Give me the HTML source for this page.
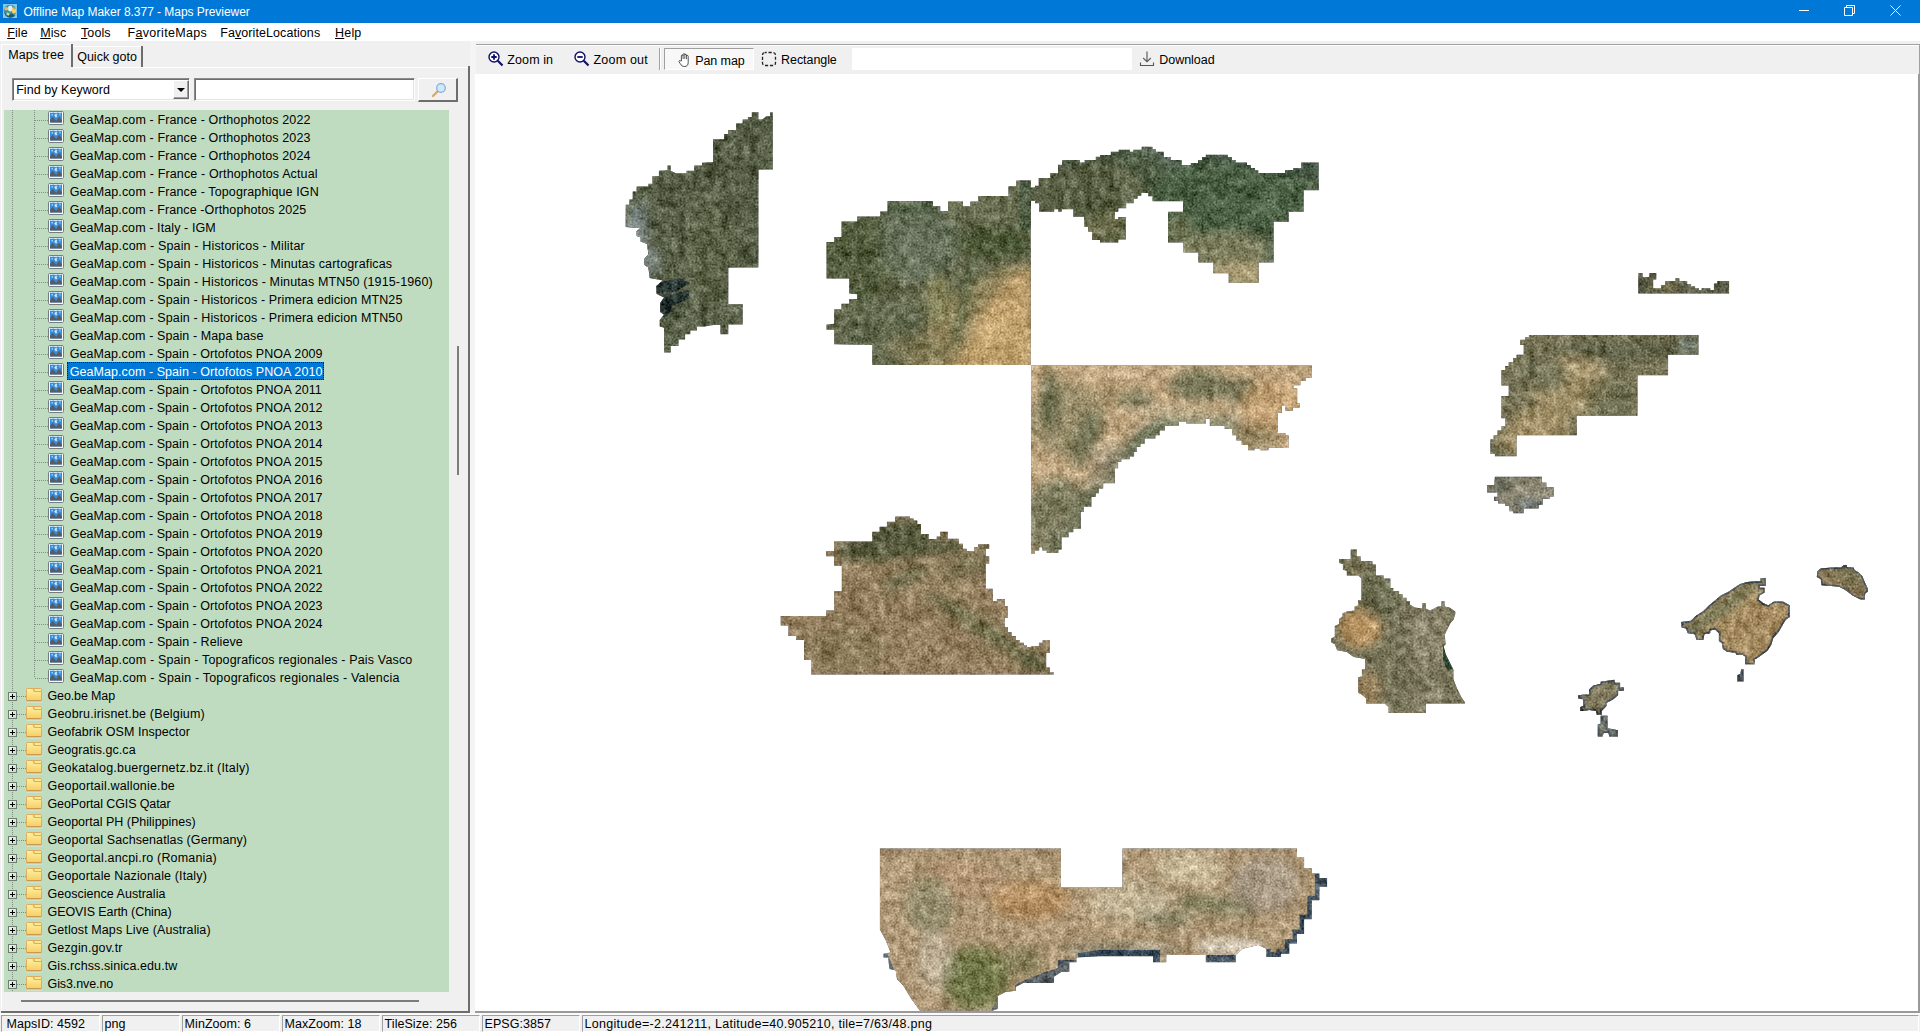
<!DOCTYPE html>
<html><head><meta charset="utf-8"><title>Offline Map Maker</title>
<style>
*{margin:0;padding:0;box-sizing:border-box}
html,body{width:1920px;height:1032px;overflow:hidden;background:#f0f0f0;font-family:"Liberation Sans",sans-serif;font-size:12.5px;color:#000}
body{position:relative}
i{display:block;position:absolute;font-style:normal}
em{font-style:normal}
.x{position:absolute;white-space:nowrap;line-height:16px;height:16px}
#title{position:absolute;left:0;top:0;width:1920px;height:23px;background:#0078d7;color:#fff}
#appic{position:absolute;left:3px;top:3px}
#tt{left:23.5px;top:4px;font-size:12px;color:#fff;letter-spacing:-0.04px}
#wc{position:absolute;left:1780px;top:0}
#menu{position:absolute;left:0;top:23px;width:1920px;height:18px;background:#fff}
#menu span{position:absolute;top:2px;line-height:16px;height:16px;white-space:nowrap;letter-spacing:0.1px}
#menu u{text-decoration:underline;text-decoration-thickness:1px;text-underline-offset:0.5px}
/* left panel */
#paneL{left:1px;top:44px;width:1px;height:968px;background:#fff}
#paneT{left:73px;top:67px;width:395px;height:1px;background:#fff}
#paneR{left:468px;top:66px;width:2px;height:947px;background:#6d6d6d}
#paneB{left:1px;top:1011px;width:469px;height:2px;background:#6d6d6d}
#tab1T{left:2px;top:44px;width:69px;height:1px;background:#fff}
#tab1R{left:71px;top:44px;width:2px;height:23px;background:#6d6d6d}
#tab2T{left:73px;top:46px;width:68px;height:1px;background:#fff}
#tab2R{left:141px;top:46px;width:2px;height:21px;background:#6d6d6d}
#combo{position:absolute;left:12px;top:78px;width:178px;height:23px;background:#fff;border:1px solid #8a8a8a;border-right-color:#fff;border-bottom-color:#fff;box-shadow:inset 1px 1px 0 #6d6d6d,inset -1px -1px 0 #e3e3e3}
#combo b{position:absolute;left:160px;top:1px;width:16px;height:19px;background:#f0f0f0;border:1px solid #fff;border-right-color:#6d6d6d;border-bottom-color:#6d6d6d;box-shadow:inset -1px -1px 0 #a0a0a0}
#combo b i{left:3px;top:7px;width:0;height:0;border:4px solid transparent;border-top:4px solid #000;border-bottom:0}
#edit{position:absolute;left:194px;top:78px;width:221px;height:23px;background:#fff;border:1px solid #8a8a8a;border-right-color:#fff;border-bottom-color:#fff;box-shadow:inset 1px 1px 0 #6d6d6d,inset -1px -1px 0 #e3e3e3}
#sbtn{position:absolute;left:418px;top:78px;width:40px;height:24px;background:#f0f0f0;border:1px solid #fff;border-right:2px solid #6d6d6d;border-bottom:2px solid #6d6d6d}
#sbtn svg{position:absolute;left:9px;top:0}
#tree{position:absolute;left:4px;top:110px;width:445px;height:882px;background:#c0dcc0;overflow:hidden}
.vl{width:1px;background-image:linear-gradient(#7f8f7f 50%,transparent 50%);background-size:1px 2px}
.row{position:absolute;left:0;height:18px;width:445px;white-space:nowrap}
.row .t{position:absolute;top:2px;line-height:16px;height:16px;letter-spacing:0.12px}
.leaf .t{left:65.7px}
.fold .t{left:43.5px}
.row .ic{position:absolute;left:44px;top:1px}
.row .fic{position:absolute;left:22px;top:2px}
.hl{left:31px;top:10px;width:13px;height:1px;background-image:linear-gradient(90deg,#7f8f7f 50%,transparent 50%);background-size:2px 1px}
.hl2{left:13px;top:10px;width:9px;height:1px;background-image:linear-gradient(90deg,#7f8f7f 50%,transparent 50%);background-size:2px 1px}
.pm{left:4px;top:6px;width:9px;height:9px;border:1px solid #6f7d6f;background:linear-gradient(135deg,#eef6ee,#c8dec8)}
.pm:before{content:"";position:absolute;left:1px;top:3px;width:5px;height:1px;background:#000}
.pm:after{content:"";position:absolute;left:3px;top:1px;width:1px;height:5px;background:#000}
.selbg{left:63px;top:0;height:18px;background:#0078d7;outline:1px dotted #1a1a1a;outline-offset:-1px}
.sel .t{color:#fff}
#vthumb{left:457px;top:346px;width:2px;height:129px;background:#7d7d7d}
#hthumb{left:21px;top:1000px;width:398px;height:2px;background:#7d7d7d}
/* toolbar */
#toolbar{position:absolute;left:476px;top:44px;width:1444px;height:30px;background:#f0f0f0;border-top:1px solid #a0a0a0;box-shadow:inset 0 1px 0 #fff}
#toolbar svg{position:absolute}
#sep{left:659px;top:48px;width:2px;height:22px;border-left:1px solid #a0a0a0;border-right:1px solid #fff}
#pan{position:absolute;left:664px;top:48px;width:90px;height:22px;border:1px solid #a0a0a0;border-right-color:#fff;border-bottom-color:#fff;background:#f8f8f8}
#tbedit{position:absolute;left:852px;top:48px;width:280px;height:22px;background:#fff}
#split{left:470px;top:41px;width:6px;height:972px;background:#f4f4f4}
#map{position:absolute;left:475px;top:74px;width:1445px;height:939px;background:#fff;overflow:hidden;border-right:2px solid #999;border-bottom:2px solid #999}
#map svg{position:absolute;left:-475px;top:-74px}
#status{position:absolute;left:0;top:1013px;width:1920px;height:19px;background:#f0f0f0;border-top:2px solid #fafafa}
#status span{position:absolute;top:0;height:17px;border:1px solid #a0a0a0;border-right-color:#fff;border-bottom-color:#fff;padding:0 0 0 1.6px;line-height:17px;white-space:nowrap;overflow:hidden;letter-spacing:0.05px}
#tbR{left:1919px;top:44px;width:1px;height:30px;background:#a0a0a0}

</style></head><body>
<svg width="0" height="0" style="position:absolute">
<defs>
<g id="imgic">
<rect x="0.5" y="0.5" width="15" height="13" rx="1.2" fill="#fbfcfd" stroke="#777c82"/>
<rect x="2" y="1.5" width="12" height="10" fill="#3b8cd6"/>
<path d="M2 11.5V9.2l2.6-3.4 3.6 4.3 2.9-4.3 2.9 3.7v2z" fill="#595b61"/>
<path d="M2.5 1.5h2M6 1.5h3M10.5 1.5h2.5" stroke="#cfe7fa" stroke-width="1"/>
<rect x="3.5" y="3" width="1.5" height="1.5" fill="#8fd0fb"/><path d="M9 3.2a1.5 1.5 0 100 2.6 2 2 0 010-2.6z" fill="#d3edfd" stroke="#bfe4fc" stroke-width="0.6"/><rect x="11.5" y="2.5" width="1" height="2" fill="#a5d9fb"/>
</g>
<linearGradient id="fg" x1="0" y1="0" x2="0" y2="1"><stop offset="0" stop-color="#fdf2a4"/><stop offset="1" stop-color="#f8cc60"/></linearGradient>
<g id="foldic">
<path d="M1.5 0.5h6l1 3h7a1 1 0 011 1v7.5a1 1 0 01-1 1h-14a1 1 0 01-1-1v-10.5a1 1 0 011-1z" fill="url(#fg)" stroke="#dcaa58" stroke-width="1"/>
<path d="M8 0.5h7.5a1 1 0 011 1V3.5H9z" fill="#fde88c" stroke="#dcaa58" stroke-width="1"/>
<path d="M1 12.5h15" stroke="#c9984c" stroke-width="1"/>
<path d="M0.5 14.2h16" stroke="#e6eede" stroke-width="0.8" opacity="0.8"/>
</g>
</defs></svg>

<div id="title"><svg id="appic" width="16" height="16" viewBox="0 0 16 16"><rect x="-0.5" y="0.5" width="15" height="15" fill="#0a62d0"/><rect x="0" y="1" width="14" height="14" fill="#82c8f0"/><circle cx="7" cy="8" r="6.2" fill="#3f8ea8"/><path d="M1.5 9.5a6 6 0 0011 2.5c-2 1-3-2-5-1s-2 2-3.5 1.5S2.5 9 1.5 9.5z" fill="#1d5c60"/><ellipse cx="7.3" cy="5.5" rx="2.3" ry="3" fill="#e4f0ee"/><ellipse cx="3.3" cy="5.8" rx="2" ry="1.7" fill="#f0b566"/><ellipse cx="11" cy="7.5" rx="2.2" ry="3" fill="#f2d468"/><ellipse cx="11.5" cy="5.8" rx="1" ry="0.5" fill="#a08a30"/><ellipse cx="5" cy="11" rx="1.6" ry="1.3" fill="#ded978" transform="rotate(35 5 11)"/></svg><span id="tt" class="x">Offline Map Maker 8.377 - Maps Previewer</span>
<svg id="wc" width="140" height="23" viewBox="0 0 140 23"><g stroke="#fff" stroke-width="1" fill="none"><path d="M19 10.5h10"/><path d="M64.5 7.5h8v8h-8z"/><path d="M66.5 7.5v-2h8v8h-2"/><path d="M110.5 5.5l10 10M120.5 5.5l-10 10"/></g></svg></div>

<div id="menu"><span style="left:7.2px"><u>F</u>ile</span><span style="left:40.2px"><u>M</u>isc</span><span style="left:81px"><u>T</u>ools</span><span style="left:127.6px;letter-spacing:0.3px">F<u>a</u>voriteMaps</span><span style="left:220.2px;letter-spacing:0.08px">Fa<u>v</u>oriteLocations</span><span style="left:335px;letter-spacing:0.2px"><u>H</u>elp</span></div>

<i id="paneL"></i><i id="paneT"></i><i id="paneR"></i><i id="paneB"></i>
<i id="tab1T"></i><i id="tab1R"></i><i id="tab2T"></i><i id="tab2R"></i>
<span class="x" style="left:8.3px;top:47px">Maps tree</span>
<span class="x" style="left:77.2px;top:49px">Quick goto</span>
<div id="combo"><span class="x" style="left:3.2px;top:3px;letter-spacing:0.05px">Find by Keyword</span><b><i></i></b></div>
<div id="edit"></div>
<div id="sbtn"><svg width="22" height="22" viewBox="0 0 22 22"><path d="M5 17l5-5" stroke="#e0a85a" stroke-width="2.4" stroke-linecap="round"/><circle cx="13" cy="9" r="4.3" fill="#cfe9fb" stroke="#84abd8" stroke-width="1.2"/></svg></div>
<div id="tree">
  <i class="vl" style="left:8px;top:0;height:882px"></i>
  <i class="vl" style="left:30px;top:0;height:568px"></i>
  <div class="row leaf" style="top:0px"><i class="hl"></i><svg class="ic" width="16" height="14" viewBox="0 0 16 14"><use href="#imgic"/></svg><span class="t" style="letter-spacing:0.123px">GeaMap.com - France - Orthophotos 2022</span></div><div class="row leaf" style="top:18px"><i class="hl"></i><svg class="ic" width="16" height="14" viewBox="0 0 16 14"><use href="#imgic"/></svg><span class="t" style="letter-spacing:0.123px">GeaMap.com - France - Orthophotos 2023</span></div><div class="row leaf" style="top:36px"><i class="hl"></i><svg class="ic" width="16" height="14" viewBox="0 0 16 14"><use href="#imgic"/></svg><span class="t" style="letter-spacing:0.123px">GeaMap.com - France - Orthophotos 2024</span></div><div class="row leaf" style="top:54px"><i class="hl"></i><svg class="ic" width="16" height="14" viewBox="0 0 16 14"><use href="#imgic"/></svg><span class="t" style="letter-spacing:0.139px">GeaMap.com - France - Orthophotos Actual</span></div><div class="row leaf" style="top:72px"><i class="hl"></i><svg class="ic" width="16" height="14" viewBox="0 0 16 14"><use href="#imgic"/></svg><span class="t" style="letter-spacing:0.123px">GeaMap.com - France - Topographique IGN</span></div><div class="row leaf" style="top:90px"><i class="hl"></i><svg class="ic" width="16" height="14" viewBox="0 0 16 14"><use href="#imgic"/></svg><span class="t" style="letter-spacing:0.107px">GeaMap.com - France -Orthophotos 2025</span></div><div class="row leaf" style="top:108px"><i class="hl"></i><svg class="ic" width="16" height="14" viewBox="0 0 16 14"><use href="#imgic"/></svg><span class="t" style="letter-spacing:0.096px">GeaMap.com - Italy - IGM</span></div><div class="row leaf" style="top:126px"><i class="hl"></i><svg class="ic" width="16" height="14" viewBox="0 0 16 14"><use href="#imgic"/></svg><span class="t" style="letter-spacing:0.162px">GeaMap.com - Spain - Historicos - Militar</span></div><div class="row leaf" style="top:144px"><i class="hl"></i><svg class="ic" width="16" height="14" viewBox="0 0 16 14"><use href="#imgic"/></svg><span class="t" style="letter-spacing:0.156px">GeaMap.com - Spain - Historicos - Minutas cartograficas</span></div><div class="row leaf" style="top:162px"><i class="hl"></i><svg class="ic" width="16" height="14" viewBox="0 0 16 14"><use href="#imgic"/></svg><span class="t" style="letter-spacing:0.138px">GeaMap.com - Spain - Historicos - Minutas MTN50 (1915-1960)</span></div><div class="row leaf" style="top:180px"><i class="hl"></i><svg class="ic" width="16" height="14" viewBox="0 0 16 14"><use href="#imgic"/></svg><span class="t" style="letter-spacing:0.115px">GeaMap.com - Spain - Historicos - Primera edicion MTN25</span></div><div class="row leaf" style="top:198px"><i class="hl"></i><svg class="ic" width="16" height="14" viewBox="0 0 16 14"><use href="#imgic"/></svg><span class="t" style="letter-spacing:0.115px">GeaMap.com - Spain - Historicos - Primera edicion MTN50</span></div><div class="row leaf" style="top:216px"><i class="hl"></i><svg class="ic" width="16" height="14" viewBox="0 0 16 14"><use href="#imgic"/></svg><span class="t" style="letter-spacing:0.09px">GeaMap.com - Spain - Mapa base</span></div><div class="row leaf" style="top:234px"><i class="hl"></i><svg class="ic" width="16" height="14" viewBox="0 0 16 14"><use href="#imgic"/></svg><span class="t" style="letter-spacing:0.066px">GeaMap.com - Spain - Ortofotos PNOA 2009</span></div><div class="row leaf sel" style="top:252px"><i class="hl"></i><i class="selbg" style="width:257px"></i><svg class="ic" width="16" height="14" viewBox="0 0 16 14"><use href="#imgic"/></svg><span class="t" style="letter-spacing:0.066px">GeaMap.com - Spain - Ortofotos PNOA 2010</span></div><div class="row leaf" style="top:270px"><i class="hl"></i><svg class="ic" width="16" height="14" viewBox="0 0 16 14"><use href="#imgic"/></svg><span class="t" style="letter-spacing:0.074px">GeaMap.com - Spain - Ortofotos PNOA 2011</span></div><div class="row leaf" style="top:288px"><i class="hl"></i><svg class="ic" width="16" height="14" viewBox="0 0 16 14"><use href="#imgic"/></svg><span class="t" style="letter-spacing:0.066px">GeaMap.com - Spain - Ortofotos PNOA 2012</span></div><div class="row leaf" style="top:306px"><i class="hl"></i><svg class="ic" width="16" height="14" viewBox="0 0 16 14"><use href="#imgic"/></svg><span class="t" style="letter-spacing:0.066px">GeaMap.com - Spain - Ortofotos PNOA 2013</span></div><div class="row leaf" style="top:324px"><i class="hl"></i><svg class="ic" width="16" height="14" viewBox="0 0 16 14"><use href="#imgic"/></svg><span class="t" style="letter-spacing:0.066px">GeaMap.com - Spain - Ortofotos PNOA 2014</span></div><div class="row leaf" style="top:342px"><i class="hl"></i><svg class="ic" width="16" height="14" viewBox="0 0 16 14"><use href="#imgic"/></svg><span class="t" style="letter-spacing:0.066px">GeaMap.com - Spain - Ortofotos PNOA 2015</span></div><div class="row leaf" style="top:360px"><i class="hl"></i><svg class="ic" width="16" height="14" viewBox="0 0 16 14"><use href="#imgic"/></svg><span class="t" style="letter-spacing:0.066px">GeaMap.com - Spain - Ortofotos PNOA 2016</span></div><div class="row leaf" style="top:378px"><i class="hl"></i><svg class="ic" width="16" height="14" viewBox="0 0 16 14"><use href="#imgic"/></svg><span class="t" style="letter-spacing:0.066px">GeaMap.com - Spain - Ortofotos PNOA 2017</span></div><div class="row leaf" style="top:396px"><i class="hl"></i><svg class="ic" width="16" height="14" viewBox="0 0 16 14"><use href="#imgic"/></svg><span class="t" style="letter-spacing:0.066px">GeaMap.com - Spain - Ortofotos PNOA 2018</span></div><div class="row leaf" style="top:414px"><i class="hl"></i><svg class="ic" width="16" height="14" viewBox="0 0 16 14"><use href="#imgic"/></svg><span class="t" style="letter-spacing:0.066px">GeaMap.com - Spain - Ortofotos PNOA 2019</span></div><div class="row leaf" style="top:432px"><i class="hl"></i><svg class="ic" width="16" height="14" viewBox="0 0 16 14"><use href="#imgic"/></svg><span class="t" style="letter-spacing:0.066px">GeaMap.com - Spain - Ortofotos PNOA 2020</span></div><div class="row leaf" style="top:450px"><i class="hl"></i><svg class="ic" width="16" height="14" viewBox="0 0 16 14"><use href="#imgic"/></svg><span class="t" style="letter-spacing:0.066px">GeaMap.com - Spain - Ortofotos PNOA 2021</span></div><div class="row leaf" style="top:468px"><i class="hl"></i><svg class="ic" width="16" height="14" viewBox="0 0 16 14"><use href="#imgic"/></svg><span class="t" style="letter-spacing:0.066px">GeaMap.com - Spain - Ortofotos PNOA 2022</span></div><div class="row leaf" style="top:486px"><i class="hl"></i><svg class="ic" width="16" height="14" viewBox="0 0 16 14"><use href="#imgic"/></svg><span class="t" style="letter-spacing:0.066px">GeaMap.com - Spain - Ortofotos PNOA 2023</span></div><div class="row leaf" style="top:504px"><i class="hl"></i><svg class="ic" width="16" height="14" viewBox="0 0 16 14"><use href="#imgic"/></svg><span class="t" style="letter-spacing:0.066px">GeaMap.com - Spain - Ortofotos PNOA 2024</span></div><div class="row leaf" style="top:522px"><i class="hl"></i><svg class="ic" width="16" height="14" viewBox="0 0 16 14"><use href="#imgic"/></svg><span class="t" style="letter-spacing:0.081px">GeaMap.com - Spain - Relieve</span></div><div class="row leaf" style="top:540px"><i class="hl"></i><svg class="ic" width="16" height="14" viewBox="0 0 16 14"><use href="#imgic"/></svg><span class="t" style="letter-spacing:0.158px">GeaMap.com - Spain - Topograficos regionales - Pais Vasco</span></div><div class="row leaf" style="top:558px"><i class="hl"></i><svg class="ic" width="16" height="14" viewBox="0 0 16 14"><use href="#imgic"/></svg><span class="t" style="letter-spacing:0.195px">GeaMap.com - Spain - Topograficos regionales - Valencia</span></div><div class="row fold" style="top:576px"><i class="hl2"></i><i class="pm"></i><svg class="fic" width="16" height="15" viewBox="0 0 17 15" preserveAspectRatio="none"><use href="#foldic"/></svg><span class="t" style="letter-spacing:-0.133px">Geo.be Map</span></div><div class="row fold" style="top:594px"><i class="hl2"></i><i class="pm"></i><svg class="fic" width="16" height="15" viewBox="0 0 17 15" preserveAspectRatio="none"><use href="#foldic"/></svg><span class="t" style="letter-spacing:0.167px">Geobru.irisnet.be (Belgium)</span></div><div class="row fold" style="top:612px"><i class="hl2"></i><i class="pm"></i><svg class="fic" width="16" height="15" viewBox="0 0 17 15" preserveAspectRatio="none"><use href="#foldic"/></svg><span class="t" style="letter-spacing:0.058px">Geofabrik OSM Inspector</span></div><div class="row fold" style="top:630px"><i class="hl2"></i><i class="pm"></i><svg class="fic" width="16" height="15" viewBox="0 0 17 15" preserveAspectRatio="none"><use href="#foldic"/></svg><span class="t" style="letter-spacing:0.04px">Geogratis.gc.ca</span></div><div class="row fold" style="top:648px"><i class="hl2"></i><i class="pm"></i><svg class="fic" width="16" height="15" viewBox="0 0 17 15" preserveAspectRatio="none"><use href="#foldic"/></svg><span class="t" style="letter-spacing:0.193px">Geokatalog.buergernetz.bz.it (Italy)</span></div><div class="row fold" style="top:666px"><i class="hl2"></i><i class="pm"></i><svg class="fic" width="16" height="15" viewBox="0 0 17 15" preserveAspectRatio="none"><use href="#foldic"/></svg><span class="t" style="letter-spacing:0.171px">Geoportail.wallonie.be</span></div><div class="row fold" style="top:684px"><i class="hl2"></i><i class="pm"></i><svg class="fic" width="16" height="15" viewBox="0 0 17 15" preserveAspectRatio="none"><use href="#foldic"/></svg><span class="t" style="letter-spacing:-0.103px">GeoPortal CGIS Qatar</span></div><div class="row fold" style="top:702px"><i class="hl2"></i><i class="pm"></i><svg class="fic" width="16" height="15" viewBox="0 0 17 15" preserveAspectRatio="none"><use href="#foldic"/></svg><span class="t" style="letter-spacing:0.008px">Geoportal PH (Philippines)</span></div><div class="row fold" style="top:720px"><i class="hl2"></i><i class="pm"></i><svg class="fic" width="16" height="15" viewBox="0 0 17 15" preserveAspectRatio="none"><use href="#foldic"/></svg><span class="t" style="letter-spacing:0.094px">Geoportal Sachsenatlas (Germany)</span></div><div class="row fold" style="top:738px"><i class="hl2"></i><i class="pm"></i><svg class="fic" width="16" height="15" viewBox="0 0 17 15" preserveAspectRatio="none"><use href="#foldic"/></svg><span class="t" style="letter-spacing:0.171px">Geoportal.ancpi.ro (Romania)</span></div><div class="row fold" style="top:756px"><i class="hl2"></i><i class="pm"></i><svg class="fic" width="16" height="15" viewBox="0 0 17 15" preserveAspectRatio="none"><use href="#foldic"/></svg><span class="t" style="letter-spacing:0.136px">Geoportale Nazionale (Italy)</span></div><div class="row fold" style="top:774px"><i class="hl2"></i><i class="pm"></i><svg class="fic" width="16" height="15" viewBox="0 0 17 15" preserveAspectRatio="none"><use href="#foldic"/></svg><span class="t" style="letter-spacing:0.024px">Geoscience Australia</span></div><div class="row fold" style="top:792px"><i class="hl2"></i><i class="pm"></i><svg class="fic" width="16" height="15" viewBox="0 0 17 15" preserveAspectRatio="none"><use href="#foldic"/></svg><span class="t" style="letter-spacing:-0.087px">GEOVIS Earth (China)</span></div><div class="row fold" style="top:810px"><i class="hl2"></i><i class="pm"></i><svg class="fic" width="16" height="15" viewBox="0 0 17 15" preserveAspectRatio="none"><use href="#foldic"/></svg><span class="t" style="letter-spacing:0.093px">Getlost Maps Live (Australia)</span></div><div class="row fold" style="top:828px"><i class="hl2"></i><i class="pm"></i><svg class="fic" width="16" height="15" viewBox="0 0 17 15" preserveAspectRatio="none"><use href="#foldic"/></svg><span class="t" style="letter-spacing:0.132px">Gezgin.gov.tr</span></div><div class="row fold" style="top:846px"><i class="hl2"></i><i class="pm"></i><svg class="fic" width="16" height="15" viewBox="0 0 17 15" preserveAspectRatio="none"><use href="#foldic"/></svg><span class="t" style="letter-spacing:0.09px">Gis.rchss.sinica.edu.tw</span></div><div class="row fold" style="top:864px"><i class="hl2"></i><i class="pm"></i><svg class="fic" width="16" height="15" viewBox="0 0 17 15" preserveAspectRatio="none"><use href="#foldic"/></svg><span class="t" style="letter-spacing:-0.092px">Gis3.nve.no</span></div>
</div>
<i id="vthumb"></i><i id="hthumb"></i>
<i id="split"></i>

<div id="toolbar"></div><i id="tbR"></i>
<svg style="position:absolute;left:488px;top:51px" width="16" height="16" viewBox="0 0 16 16"><circle cx="6" cy="6" r="5" fill="#fff" stroke="#10106a" stroke-width="1.4"/><path d="M3.3 6h5.4M6 3.3v5.4" stroke="#10106a" stroke-width="1.8"/><path d="M9.8 9.8l4.7 4.7" stroke="#10106a" stroke-width="2.2"/></svg>
<span class="x" style="left:507.3px;top:52px;letter-spacing:0.1px">Zoom in</span>
<svg style="position:absolute;left:574px;top:51px" width="16" height="16" viewBox="0 0 16 16"><circle cx="6" cy="6" r="5" fill="#fff" stroke="#10106a" stroke-width="1.4"/><path d="M3.3 6h5.4" stroke="#10106a" stroke-width="1.8"/><path d="M9.8 9.8l4.7 4.7" stroke="#10106a" stroke-width="2.2"/></svg>
<span class="x" style="left:593.5px;top:52px;letter-spacing:0.2px">Zoom out</span>
<i id="sep"></i>
<div id="pan"></div>
<svg style="position:absolute;left:678px;top:53px" width="12" height="14" viewBox="0 0 12 14"><path d="M3.4 8V2.8a.85.85 0 011.7 0V1.5a.85.85 0 011.7 0v.6a.85.85 0 011.7 0v1.2a.85.85 0 011.7 0V9.5c0 2.4-1.2 4-3.6 4-2.2 0-3.3-1-4.3-2.8L1 8.8c-.5-1 .8-1.7 1.4-.9z" fill="#fff" stroke="#3c3c3c" stroke-width="0.9" stroke-linejoin="round"/><path d="M5.1 2.8V6M6.8 2V6M8.5 3.2V6.2" stroke="#3c3c3c" stroke-width="0.8" fill="none"/></svg>
<span class="x" style="left:695.2px;top:53px;letter-spacing:-0.08px">Pan map</span>
<svg style="position:absolute;left:761px;top:51px" width="16" height="16" viewBox="0 0 16 16"><rect x="1.5" y="1.5" width="13" height="13" rx="2.5" fill="none" stroke="#222" stroke-width="1.3" stroke-dasharray="3.2 1.8" stroke-dashoffset="1.5"/></svg>
<span class="x" style="left:781.1px;top:52px;letter-spacing:-0.07px">Rectangle</span>
<div id="tbedit"></div>
<svg style="position:absolute;left:1139px;top:50px" width="16" height="17" viewBox="0 0 16 17"><path d="M8 1.5v10M4.2 8L8 11.8 11.8 8M1.5 12.5v3h13v-3" fill="none" stroke="#555" stroke-width="1.1"/></svg>
<span class="x" style="left:1159.2px;top:52px;letter-spacing:-0.02px">Download</span>

<div id="map">
<svg width="1920" height="1032" viewBox="0 0 1920 1032">
<defs>
<filter id="bl" x="-50%" y="-50%" width="200%" height="200%"><feGaussianBlur stdDeviation="5"/></filter>
<filter id="tex" filterUnits="userSpaceOnUse" x="476" y="74" width="1444" height="940" color-interpolation-filters="sRGB">
<feTurbulence type="fractalNoise" baseFrequency="0.5" numOctaves="2" seed="7" result="n1"/>
<feColorMatrix in="n1" type="matrix" values="0.6 0.6 0 0 -0.1  0.6 0.6 0 0 -0.1  0.55 0.55 0 0 -0.05  0 0 0 0 1" result="g1"/>
<feTurbulence type="fractalNoise" baseFrequency="0.14" numOctaves="2" seed="23" result="n3"/>
<feColorMatrix in="n3" type="matrix" values="0.5 0.5 0 0 0  0.5 0.5 0 0 0  0.5 0.5 0 0 0  0 0 0 0 1" result="g3"/>
<feTurbulence type="fractalNoise" baseFrequency="0.05" numOctaves="2" seed="11" result="n2"/>
<feColorMatrix in="n2" type="matrix" values="0.5 0.5 0 0 0  0.5 0.5 0 0 0  0.5 0.5 0 0 0  0 0 0 0 1" result="g2"/>
<feComposite in="SourceGraphic" in2="g1" operator="arithmetic" k1="0" k2="1" k3="0.52" k4="-0.26" result="a1"/>
<feComposite in="a1" in2="g3" operator="arithmetic" k1="0" k2="1" k3="0.5" k4="-0.25" result="a3"/>
<feComposite in="a3" in2="g2" operator="arithmetic" k1="0" k2="1" k3="0.3" k4="-0.15" result="a2"/>
<feComposite in="a2" in2="SourceAlpha" operator="in"/>
</filter>

<clipPath id="c_galicia"><polygon points="751.8,112.3 758.4,112.3 758.4,119.6 762.3,119.6 766.2,116.2 770.2,116.2 770.2,112.3 772.8,112.3 772.8,169.4 758.4,169.4 758.4,267.5 728.3,267.5 728.3,304.2 742.7,304.2 742.7,324.6 728.3,324.6 728.3,334.3 720.4,334.3 720.4,325.1 713.9,325.1 704.7,326.4 696.9,326.4 696.9,330.4 690.3,330.4 690.3,334.3 685.1,334.3 685.1,339.5 678.5,339.5 678.5,346.1 670.7,346.1 670.7,352.6 664.1,352.6 664.1,327.7 659.7,326.4 659.7,319.9 664.1,314.7 660.2,312.0 660.2,302.9 664.1,297.6 656.3,293.7 656.3,285.9 662.8,280.6 649.7,278.0 648.4,267.5 644.5,264.9 644.5,258.4 648.4,254.5 647.1,244.0 640.6,241.4 640.6,237.4 636.6,236.1 636.6,230.9 640.6,228.3 625.7,227.0 625.7,204.7 629.3,204.7 629.3,199.5 632.7,199.5 632.7,191.6 636.6,191.6 636.6,186.4 648.4,186.4 648.4,183.8 652.4,183.8 652.4,175.9 658.9,175.9 658.9,170.7 667.5,170.2 667.5,165.4 670.7,165.4 670.7,170.7 675.9,173.3 686.4,173.3 686.4,170.7 694.2,170.7 694.2,165.4 702.1,165.4 702.1,162.8 713.1,162.3 713.1,139.3 724.3,139.3 724.3,134.0 728.3,134.0 728.3,130.1 736.1,130.1 736.1,123.6 742.7,123.6 742.7,119.6 747.9,119.6 747.9,117.0 751.8,117.0" shape-rendering="crispEdges"/></clipPath>
<clipPath id="c_cyl"><polygon points="887.5,200.9 933.0,200.9 933.0,206.3 940.3,206.3 940.3,211.1 948.0,211.1 948.0,201.4 963.0,201.4 963.0,206.3 970.3,206.3 970.3,201.4 978.3,201.4 978.3,195.9 1008.5,195.9 1008.5,186.2 1016.3,186.2 1016.3,180.4 1030.8,180.4 1030.8,364.9 872.2,364.9 872.2,345.0 834.2,344.3 834.2,329.8 826.5,329.8 826.5,324.4 834.2,323.7 834.2,309.2 841.5,309.2 841.5,303.8 849.2,303.8 849.2,299.0 857.2,299.0 857.2,294.2 849.2,293.4 849.2,278.4 826.5,278.4 826.5,242.1 834.2,242.1 834.2,237.0 841.5,237.0 841.5,221.5 857.2,221.5 857.2,216.4 880.2,216.4 880.2,211.6 887.5,211.6" shape-rendering="crispEdges"/></clipPath>
<clipPath id="c_north"><polygon points="1020.0,180.8 1030.8,180.8 1030.8,187.5 1035.0,187.5 1035.0,185.8 1038.7,185.8 1038.7,178.0 1050.3,178.0 1050.3,173.3 1058.0,173.3 1058.0,164.7 1062.0,164.7 1062.0,160.0 1080.0,160.0 1080.0,162.5 1084.7,162.5 1084.7,160.0 1095.8,160.0 1095.8,156.7 1100.0,156.7 1100.0,155.0 1110.8,155.0 1110.8,151.7 1118.7,151.7 1118.7,149.7 1130.0,149.7 1130.0,151.7 1133.3,151.7 1133.3,149.7 1141.7,149.7 1141.7,146.7 1152.5,146.7 1152.5,149.2 1155.8,149.2 1155.8,151.7 1163.7,151.7 1163.7,157.0 1170.8,157.0 1170.8,160.0 1181.7,160.0 1181.7,165.0 1190.8,165.0 1190.8,163.0 1198.0,163.0 1198.0,160.0 1202.0,160.0 1202.0,157.0 1205.8,157.0 1205.8,154.7 1228.0,154.7 1228.0,157.0 1232.0,157.0 1232.0,160.0 1235.8,160.0 1235.8,162.5 1247.0,162.5 1247.0,165.0 1250.8,165.0 1250.8,168.0 1255.0,168.0 1255.0,170.3 1258.3,170.3 1258.3,173.0 1285.0,173.0 1285.0,170.0 1293.3,170.0 1293.3,168.0 1301.3,168.0 1301.3,162.5 1318.7,162.5 1318.7,190.3 1303.7,190.3 1303.7,211.7 1288.7,211.7 1288.7,221.7 1273.7,221.7 1273.7,262.5 1258.7,262.5 1258.7,283.0 1228.7,283.0 1228.7,273.3 1213.3,273.3 1213.3,262.5 1198.3,262.5 1198.3,252.5 1183.3,252.5 1183.3,242.5 1168.0,242.5 1168.0,211.7 1183.0,211.7 1183.0,201.3 1152.5,201.3 1152.5,196.3 1148.3,196.3 1148.3,193.0 1141.3,193.0 1141.3,195.8 1137.5,195.8 1137.5,198.7 1133.7,198.7 1133.7,203.3 1126.2,203.3 1126.2,208.3 1118.3,208.3 1118.3,211.7 1115.0,211.7 1115.0,219.2 1118.3,219.2 1118.3,217.0 1125.8,217.0 1125.8,239.5 1118.3,239.5 1118.3,242.5 1100.0,242.5 1100.0,240.0 1092.0,240.0 1092.0,231.7 1088.0,231.7 1088.0,226.7 1084.2,226.7 1084.2,216.7 1073.3,216.7 1073.3,209.2 1061.7,209.2 1061.7,211.7 1058.0,211.7 1058.0,209.2 1054.2,209.2 1054.2,211.7 1039.2,211.7 1039.2,203.3 1035.0,203.3 1035.0,200.8 1030.8,200.8 1030.8,230.0 1020.0,230.0" shape-rendering="crispEdges"/></clipPath>
<clipPath id="c_aragon"><polygon points="1031.1,365.4 1311.7,365.4 1311.7,377.7 1305.7,377.7 1305.7,380.9 1300.4,380.9 1300.4,385.2 1294.0,385.2 1294.0,388.4 1297.2,388.4 1297.2,403.3 1299.7,403.3 1299.7,407.6 1292.9,407.6 1292.9,410.8 1285.5,410.8 1285.5,405.9 1281.8,405.9 1281.8,412.9 1278.0,412.9 1278.0,433.2 1285.5,433.2 1285.5,435.3 1288.7,435.3 1288.7,448.1 1268.4,448.1 1268.4,450.2 1259.9,450.2 1259.9,448.5 1254.5,448.5 1254.5,450.2 1248.1,450.2 1248.1,444.9 1241.7,444.9 1241.7,440.6 1236.4,440.6 1236.4,435.3 1232.2,435.3 1232.2,428.9 1224.7,428.9 1224.7,425.7 1209.8,425.7 1209.8,418.7 1205.9,418.7 1205.9,423.6 1186.3,423.6 1186.3,421.4 1178.8,421.4 1178.8,425.7 1165.0,425.7 1165.0,430.6 1159.7,430.6 1159.7,435.3 1155.4,435.3 1155.4,438.5 1144.7,438.5 1144.7,443.8 1140.5,443.8 1140.5,447.0 1136.8,447.0 1136.8,451.9 1134.1,451.9 1134.1,456.6 1129.8,456.6 1129.8,459.2 1121.3,459.2 1121.3,461.9 1118.1,461.9 1118.1,468.3 1114.9,468.3 1114.9,483.3 1103.2,483.3 1103.2,488.6 1098.9,488.6 1098.9,493.3 1095.7,493.3 1095.7,497.1 1091.4,497.1 1091.4,506.7 1084.0,506.7 1084.0,512.0 1080.8,512.0 1080.8,528.7 1073.3,528.7 1073.3,532.3 1068.6,532.3 1068.6,537.2 1061.6,537.2 1061.6,549.4 1058.4,549.4 1058.4,553.0 1046.7,553.0 1046.7,550.4 1042.4,550.4 1042.4,547.2 1039.2,547.2 1039.2,550.4 1034.9,550.4 1034.9,553.6 1031.1,553.6" shape-rendering="crispEdges"/></clipPath>
<clipPath id="c_extrem"><polygon points="895.2,516.6 910.0,516.6 910.0,518.4 913.6,518.4 913.6,520.6 917.3,520.6 917.3,523.9 921.0,523.9 921.0,534.1 928.7,534.1 928.7,539.0 936.7,539.0 936.7,536.5 940.3,536.5 940.3,531.7 947.7,531.7 947.7,538.7 958.8,538.7 958.8,543.8 963.0,543.8 963.0,548.8 966.7,548.8 966.7,551.2 974.1,551.2 974.1,547.0 978.1,547.0 978.1,544.2 989.2,544.2 989.2,548.8 985.8,548.8 985.8,556.2 989.2,556.2 989.2,563.5 985.8,563.5 985.8,588.8 992.8,588.8 992.8,600.9 996.9,600.9 996.9,598.9 1004.8,598.9 1004.8,605.9 1007.6,605.9 1007.6,617.9 1004.8,617.9 1004.8,627.1 1007.9,627.1 1007.9,632.2 1011.6,632.2 1011.6,635.9 1015.9,635.9 1015.9,640.0 1019.5,640.0 1019.5,642.7 1023.8,642.7 1023.8,645.5 1026.9,645.5 1026.9,647.3 1031.5,647.3 1031.5,645.9 1038.9,645.9 1038.9,642.7 1042.6,642.7 1042.6,640.3 1049.9,640.3 1049.9,652.9 1046.2,652.9 1046.2,667.6 1049.9,667.6 1049.9,672.2 1053.6,672.2 1053.6,674.6 811.4,674.6 811.4,659.9 804.1,659.9 804.1,640.0 796.2,640.0 796.2,635.9 788.4,635.9 788.4,625.6 780.7,625.6 780.7,616.0 826.2,616.0 826.2,610.5 834.1,610.5 834.1,591.2 841.8,591.2 841.8,565.9 834.1,565.9 834.1,556.2 826.2,556.2 826.2,551.2 834.1,551.2 834.1,541.4 872.2,541.4 872.2,531.7 879.6,531.7 879.6,526.7 886.9,526.7 886.9,521.7 895.2,521.7" shape-rendering="crispEdges"/></clipPath>
<clipPath id="c_andal"><polygon points="879.9,848.6 1060.9,848.6 1060.9,887.4 1122.4,887.4 1122.4,848.6 1297.0,848.6 1297.0,857.6 1304.1,857.6 1304.1,868.3 1311.8,868.3 1311.8,873.4 1319.4,873.4 1319.4,878.0 1327.1,878.0 1327.1,886.7 1319.4,886.7 1319.4,900.2 1311.8,900.2 1311.8,919.3 1304.1,919.3 1304.1,934.1 1297.0,934.1 1297.0,943.6 1289.3,943.6 1289.3,953.8 1281.1,953.8 1281.1,957.1 1266.3,957.1 1266.3,948.7 1258.2,944.9 1242.8,948.7 1235.7,955.1 1235.7,962.2 1205.8,962.2 1205.8,955.1 1166.3,955.1 1166.3,962.2 1153.0,962.2 1153.0,956.3 1099.9,956.3 1076.4,957.6 1076.4,962.2 1069.3,962.2 1069.3,971.7 1061.6,971.7 1054.0,976.8 1054.0,983.1 1038.7,983.1 1023.3,983.1 1015.7,987.0 1015.7,990.8 1005.5,992.1 997.8,995.9 997.8,1008.7 992.7,1010.7 920.0,1010.7 911.0,998.5 903.4,985.7 897.0,979.3 895.7,970.4 889.4,969.1 888.1,957.6 883.5,957.6 883.5,953.8 890.6,952.5 885.5,939.7 879.9,929.5" shape-rendering="crispEdges"/></clipPath>
<clipPath id="c_valencia"><polygon points="1350.7,549.4 1356.9,549.4 1356.9,556.2 1360.8,556.2 1360.8,561.0 1372.4,561.0 1372.4,564.5 1375.9,564.5 1375.9,575.5 1383.6,575.5 1383.6,578.4 1390.4,578.4 1390.4,588.1 1393.3,588.1 1393.3,591.0 1399.1,591.0 1399.1,594.0 1402.6,594.0 1402.6,597.8 1406.5,597.8 1406.5,601.3 1409.8,601.3 1409.8,604.6 1414.7,607.5 1422.4,608.5 1422.4,603.3 1425.9,603.3 1425.9,608.5 1429.8,610.4 1434.0,608.5 1437.9,606.6 1441.4,606.6 1441.4,601.3 1444.7,601.3 1444.7,606.6 1449.5,607.5 1455.3,611.4 1455.3,614.3 1453.4,620.1 1450.5,623.0 1447.6,628.8 1444.7,634.7 1445.7,644.3 1443.7,646.3 1445.7,654.0 1449.5,661.8 1453.4,669.5 1453.4,679.2 1457.3,688.9 1461.2,696.7 1465.0,702.5 1465.0,703.4 1425.9,703.4 1425.9,713.1 1388.5,713.1 1388.5,707.3 1384.6,703.4 1366.2,703.4 1366.2,698.6 1361.9,694.7 1358.1,692.8 1358.1,677.3 1361.9,676.3 1361.9,669.5 1365.2,669.5 1365.2,658.9 1353.6,656.9 1346.8,652.1 1337.1,650.2 1334.8,644.3 1331.3,642.4 1331.3,638.5 1334.8,636.6 1334.8,625.9 1339.1,624.0 1339.1,619.1 1342.6,616.2 1342.6,613.3 1346.8,611.4 1354.6,610.4 1354.6,606.6 1358.1,605.6 1358.1,600.2 1361.4,600.2 1361.4,578.4 1358.1,575.5 1346.8,575.5 1346.8,570.7 1342.9,569.7 1342.9,563.9 1339.1,562.9 1339.1,559.1 1350.7,559.1" shape-rendering="crispEdges"/></clipPath>
<clipPath id="c_pyr_small"><polygon points="1638.3,273.1 1642.7,273.1 1642.7,277.0 1649.3,277.0 1649.3,273.1 1656.3,273.1 1656.3,279.6 1653.2,279.6 1653.2,288.3 1661.0,288.3 1661.0,284.9 1665.0,284.9 1665.0,280.9 1675.4,280.9 1675.4,278.3 1679.4,278.3 1679.4,280.9 1687.2,280.9 1687.2,284.1 1691.1,284.1 1691.1,286.2 1695.1,286.2 1695.1,288.3 1699.0,288.3 1699.0,290.1 1701.6,290.1 1701.6,288.3 1710.3,288.3 1710.3,290.1 1713.9,290.1 1713.9,283.6 1717.3,283.6 1717.3,280.9 1729.1,280.9 1729.1,293.5 1638.3,293.5" shape-rendering="crispEdges"/></clipPath>
<clipPath id="c_cat"><polygon points="1528.9,335.1 1698.5,335.1 1698.5,354.7 1668.1,354.7 1668.1,375.2 1637.5,375.2 1637.5,415.7 1576.8,415.7 1576.8,435.3 1516.6,435.3 1516.6,456.3 1494.9,456.3 1494.9,453.7 1490.4,453.7 1490.4,439.3 1493.6,439.3 1493.6,435.3 1497.5,435.3 1497.5,430.6 1501.4,430.6 1501.4,426.2 1505.3,426.2 1505.3,418.3 1501.4,418.3 1501.4,396.1 1508.7,396.1 1508.7,385.6 1501.4,385.6 1501.4,369.9 1505.3,369.9 1505.3,366.0 1508.7,366.0 1508.7,362.1 1513.2,362.1 1513.2,358.1 1516.6,358.1 1516.6,354.7 1523.7,354.7 1523.7,345.1 1520.2,345.1 1520.2,339.8 1525.0,339.8 1525.0,337.2 1528.9,337.2" shape-rendering="crispEdges"/></clipPath>
<clipPath id="c_cat_small"><polygon points="1494.9,476.7 1542.0,476.7 1542.0,482.5 1546.4,482.5 1546.4,487.2 1553.7,487.2 1553.7,496.8 1549.8,496.8 1549.8,498.7 1542.8,498.7 1542.8,504.7 1538.6,504.7 1538.6,508.6 1523.7,508.6 1523.7,513.3 1513.2,513.3 1513.2,511.2 1509.3,511.2 1509.3,506.0 1505.3,506.0 1505.3,503.4 1498.3,503.4 1498.3,500.8 1494.1,500.8 1494.1,496.8 1497.5,496.8 1497.5,492.4 1487.0,492.4 1487.0,485.1 1494.1,485.1" shape-rendering="crispEdges"/></clipPath>
<clipPath id="c_mallorca"><polygon points="1760.6,578.1 1765.8,578.1 1765.8,585.9 1759.6,585.9 1759.6,587.8 1764.5,587.8 1764.5,592.6 1759.6,595.5 1758.6,599.4 1763.5,603.3 1768.3,605.2 1774.1,601.4 1782.9,601.4 1789.7,605.2 1789.7,616.9 1785.8,619.8 1782.9,624.6 1779.0,631.4 1773.2,638.2 1771.2,645.0 1767.4,650.8 1759.6,656.6 1754.8,659.5 1754.8,664.3 1745.1,664.3 1745.1,656.6 1742.2,654.7 1736.4,654.7 1735.4,652.7 1726.7,651.7 1722.8,648.8 1721.8,643.0 1718.9,641.1 1718.9,633.3 1715.0,629.5 1710.2,630.4 1710.2,633.3 1704.4,634.3 1703.4,640.1 1696.6,640.1 1694.7,634.3 1687.9,633.3 1686.0,628.5 1681.7,627.5 1681.1,622.1 1690.8,620.7 1695.7,615.9 1703.4,611.0 1709.2,605.2 1715.0,600.4 1720.9,595.5 1728.6,591.7 1734.4,587.8 1740.2,583.9 1747.0,582.0 1760.6,581.0" shape-rendering="crispEdges"/></clipPath>
<clipPath id="c_islet"><polygon points="1741.2,669.2 1743.7,669.2 1743.7,681.4 1737.3,681.4 1737.3,675.0 1740.2,674.0" shape-rendering="crispEdges"/></clipPath>
<clipPath id="c_menorca"><polygon points="1820.7,568.4 1831.3,567.4 1841.0,567.4 1843.9,565.1 1846.8,565.1 1846.8,567.1 1853.6,567.4 1854.6,570.3 1858.4,572.3 1862.3,576.2 1865.2,582.9 1867.8,588.8 1867.8,591.7 1865.2,593.6 1864.7,599.4 1860.4,599.4 1852.6,595.5 1844.9,589.7 1839.1,586.8 1831.3,585.9 1821.6,585.3 1820.7,579.1 1816.8,577.1 1817.4,571.3" shape-rendering="crispEdges"/></clipPath>
<clipPath id="c_ibiza"><polygon points="1600.7,681.8 1614.3,679.8 1615.2,682.8 1620.1,682.8 1620.1,687.6 1624.0,687.6 1624.0,690.5 1618.1,691.1 1618.1,695.3 1613.3,699.2 1606.5,703.1 1606.5,706.0 1601.7,710.9 1601.7,714.7 1596.8,714.7 1595.9,710.9 1589.1,709.9 1585.2,710.9 1580.3,710.9 1580.3,707.0 1583.3,706.0 1583.3,699.2 1578.4,698.8 1578.4,695.3 1584.2,694.4 1589.1,694.4 1589.1,689.5 1592.9,685.7 1600.7,683.7" shape-rendering="crispEdges"/></clipPath>
<clipPath id="c_formentera"><polygon points="1600.7,715.7 1607.5,715.7 1607.5,728.3 1613.3,729.3 1617.8,730.2 1617.8,736.4 1609.4,736.4 1608.4,733.1 1603.6,733.1 1602.6,736.4 1597.8,736.4 1597.8,724.4 1600.7,723.4" shape-rendering="crispEdges"/></clipPath>
</defs>
<g filter="url(#tex)">
<g clip-path="url(#c_galicia)"><rect x="625" y="111" width="149" height="242" fill="#596048"/>
<g filter="url(#bl)">
<ellipse cx="636" cy="240" rx="12" ry="34" fill="#8c979d" opacity="0.7"/>
<ellipse cx="650" cy="262" rx="12" ry="14" fill="#9aa3a6" opacity="0.6"/>
<ellipse cx="668" cy="298" rx="14" ry="10" fill="#3a4640" opacity="0.5"/>
<ellipse cx="640" cy="212" rx="10" ry="14" fill="#6f7a78" opacity="0.5"/>
<ellipse cx="735" cy="160" rx="30" ry="40" fill="#525a3f" opacity="0.5"/>
<ellipse cx="710" cy="250" rx="25" ry="50" fill="#5f6448" opacity="0.5"/>
</g>
<polygon points="655,283 680,278 690,283 675,292 657,293" fill="#1f2b2c" opacity="0.85"/>
<polygon points="660,300 668,296 688,290 690,298 672,306 668,316 660,318" fill="#1f2b2c" opacity="0.85"/>
</g>
<g clip-path="url(#c_cyl)"><rect x="826" y="179" width="206" height="186" fill="#676b4f"/>
<g filter="url(#bl)">
<ellipse cx="855" cy="250" rx="38" ry="50" fill="#4f5b38" opacity="0.85"/>
<ellipse cx="918" cy="240" rx="40" ry="42" fill="#68735e" opacity="0.8"/>
<ellipse cx="905" cy="200" rx="40" ry="12" fill="#566548" opacity="0.7"/>
<ellipse cx="985" cy="212" rx="50" ry="16" fill="#63684d" opacity="0.7"/>
<ellipse cx="995" cy="243" rx="40" ry="16" fill="#44532e" opacity="0.8"/>
<ellipse cx="880" cy="330" rx="45" ry="35" fill="#5f674d" opacity="0.7"/>
<polygon points="905,372 1035,372 1035,262 1000,268 975,282 950,300 925,330" fill="#9a8b60" opacity="0.8"/>
<polygon points="950,372 1035,372 1035,268 1012,275 990,300 972,335" fill="#c0a06e" opacity="0.95"/>
<ellipse cx="1000" cy="335" rx="30" ry="30" fill="#c6a673" opacity="0.6"/>
<ellipse cx="964" cy="305" rx="5" ry="45" fill="#5b6848" opacity="0.85" transform="rotate(14 964 305)"/>
<ellipse cx="938" cy="300" rx="12" ry="26" fill="#8d8a5c" opacity="0.7"/>
<ellipse cx="915" cy="350" rx="30" ry="14" fill="#7a7350" opacity="0.7"/>
</g>
</g>
<g clip-path="url(#c_north)"><rect x="1019" y="146" width="301" height="138" fill="#536148"/>
<g filter="url(#bl)">
<ellipse cx="1090" cy="200" rx="60" ry="40" fill="#5c6043" opacity="0.8"/>
<ellipse cx="1120" cy="235" rx="40" ry="25" fill="#6a6b49" opacity="0.7"/>
<ellipse cx="1230" cy="195" rx="80" ry="40" fill="#4b6044" opacity="0.8"/>
<ellipse cx="1225" cy="250" rx="45" ry="18" fill="#868463" opacity="0.8"/>
<ellipse cx="1240" cy="274" rx="35" ry="12" fill="#b3a27a" opacity="0.9"/>
<ellipse cx="1180" cy="240" rx="14" ry="25" fill="#7a7958" opacity="0.6"/>
<polygon points="1020,147 1330,147 1330,180 1250,168 1210,160 1170,170 1140,150 1100,155 1060,165 1020,185" fill="#3e4d52" opacity="0.3"/>
</g>
</g>
<g clip-path="url(#c_aragon)"><rect x="1030" y="364" width="283" height="190" fill="#bfa681"/>
<g filter="url(#bl)">
<polyline points="1240,430 1165,428 1145,440 1134,454 1118,464 1115,485 1096,495 1084,509 1081,531 1062,539 1058,556" fill="none" stroke="#9a957e" stroke-width="30" opacity="0.7" stroke-linejoin="round"/>
<polyline points="1230,426 1165,426 1145,438 1134,452 1118,462 1115,483 1096,493 1084,507 1081,529 1062,537 1058,553" fill="none" stroke="#56654a" stroke-width="15" opacity="0.85" stroke-linejoin="round"/>
<ellipse cx="1068" cy="420" rx="38" ry="36" fill="#7d7c5c" opacity="0.6"/>
<ellipse cx="1050" cy="400" rx="10" ry="30" fill="#5e6549" opacity="0.7"/>
<ellipse cx="1085" cy="440" rx="12" ry="30" fill="#5e6549" opacity="0.6" transform="rotate(20 1085 440)"/>
<ellipse cx="1058" cy="520" rx="36" ry="42" fill="#74765a" opacity="0.85"/>
<ellipse cx="1200" cy="385" rx="30" ry="16" fill="#60684c" opacity="0.7"/>
<ellipse cx="1242" cy="392" rx="18" ry="14" fill="#5f674b" opacity="0.7"/>
<ellipse cx="1135" cy="400" rx="18" ry="10" fill="#646a4e" opacity="0.7"/>
<ellipse cx="1275" cy="405" rx="35" ry="25" fill="#c19d6e" opacity="0.7"/>
<ellipse cx="1110" cy="472" rx="22" ry="28" fill="#9a9078" opacity="0.6"/>
<ellipse cx="1255" cy="438" rx="22" ry="14" fill="#857a56" opacity="0.6"/>
<ellipse cx="1180" cy="415" rx="50" ry="8" fill="#c2b595" opacity="0.6" transform="rotate(8 1180 415)"/>
<ellipse cx="1100" cy="395" rx="30" ry="8" fill="#a2946e" opacity="0.5"/>
</g>
</g>
<g clip-path="url(#c_extrem)"><rect x="780" y="516" width="275" height="160" fill="#917d5d"/>
<g filter="url(#bl)">
<polygon points="838,545 880,520 925,518 935,540 965,540 960,552 920,556 880,562 838,560" fill="#4f5638" opacity="0.85"/>
<ellipse cx="985" cy="630" rx="70" ry="9" fill="#686b4b" opacity="0.75" transform="rotate(33 985 630)"/>
<ellipse cx="905" cy="578" rx="25" ry="8" fill="#6d7352" opacity="0.6" transform="rotate(-25 905 578)"/>
<ellipse cx="975" cy="562" rx="35" ry="12" fill="#6f7050" opacity="0.55" transform="rotate(-20 975 562)"/>
<ellipse cx="840" cy="650" rx="50" ry="22" fill="#88795a" opacity="0.5"/>
<ellipse cx="930" cy="645" rx="45" ry="25" fill="#9c8667" opacity="0.5"/>
<ellipse cx="1035" cy="662" rx="16" ry="10" fill="#5f6343" opacity="0.7"/>
</g>
</g>
<g clip-path="url(#c_andal)"><rect x="879" y="848" width="449" height="164" fill="#ad9776"/>
<g filter="url(#bl)">
<ellipse cx="1030" cy="900" rx="40" ry="20" fill="#b68b5c" opacity="0.7"/>
<ellipse cx="960" cy="880" rx="40" ry="20" fill="#b39270" opacity="0.5"/>
<ellipse cx="930" cy="905" rx="24" ry="30" fill="#8a8a6c" opacity="0.65"/>
<ellipse cx="975" cy="978" rx="34" ry="32" fill="#66703f" opacity="0.85"/>
<ellipse cx="1020" cy="962" rx="22" ry="14" fill="#74764e" opacity="0.6"/>
<ellipse cx="935" cy="960" rx="18" ry="30" fill="#c4bba6" opacity="0.6"/>
<ellipse cx="1130" cy="900" rx="40" ry="22" fill="#cabfa3" opacity="0.7"/>
<ellipse cx="1190" cy="868" rx="35" ry="16" fill="#cfc3a4" opacity="0.7"/>
<ellipse cx="1215" cy="905" rx="42" ry="10" fill="#777a5a" opacity="0.7" transform="rotate(8 1215 905)"/>
<ellipse cx="1165" cy="918" rx="28" ry="10" fill="#7e8062" opacity="0.6"/>
<ellipse cx="1265" cy="885" rx="35" ry="28" fill="#a0968a" opacity="0.6"/>
<ellipse cx="1230" cy="947" rx="36" ry="9" fill="#dcd6c8" opacity="0.75"/>
<ellipse cx="1120" cy="950" rx="60" ry="7" fill="#88897a" opacity="0.6"/>
</g>
<polygon points="1078,953 1100,950 1160,950 1160,964 1078,964" fill="#31465a" opacity="0.9"/>
<polygon points="1186,955 1240,955 1240,964 1186,964" fill="#31465a" opacity="0.85"/>
<polygon points="1058,960 1080,960 1080,974 1058,974" fill="#34485c" opacity="0.7"/>
<polygon points="1015,985 1030,978 1045,972 1058,968 1058,985 1040,990 1015,996" fill="#34485c" opacity="0.7"/>
<polygon points="997,1000 1012,990 1016,1000 1000,1012 990,1012" fill="#34485c" opacity="0.6"/>
<polygon points="879,949 886,949 892,965 900,985 912,1000 920,1012 908,1012 895,990 884,968 879,958" fill="#3f5868" opacity="0.8"/>
<polyline points="1319.4,873.4 1319.4,878.0 1327.1,878.0 1327.1,886.7 1319.4,886.7 1319.4,900.2 1311.8,900.2 1311.8,919.3 1304.1,919.3 1304.1,934.1 1297.0,934.1 1297.0,943.6 1289.3,943.6 1289.3,953.8 1281.1,953.8 1281.1,957.1 1266.3,957.1 1266.3,948.7" fill="none" stroke="#33485c" stroke-width="9" opacity="0.85"/>
</g>
<g clip-path="url(#c_valencia)"><rect x="1330" y="548" width="136" height="166" fill="#77745a"/>
<g filter="url(#bl)">
<ellipse cx="1360" cy="628" rx="22" ry="20" fill="#bb9562" opacity="0.9"/>
<ellipse cx="1380" cy="590" rx="25" ry="30" fill="#686950" opacity="0.6"/>
<ellipse cx="1400" cy="690" rx="22" ry="22" fill="#6f6d53" opacity="0.6"/>
<ellipse cx="1428" cy="635" rx="22" ry="35" fill="#918972" opacity="0.7"/>
<ellipse cx="1368" cy="690" rx="12" ry="20" fill="#ad8f64" opacity="0.7"/>
<ellipse cx="1355" cy="570" rx="14" ry="10" fill="#716a4a" opacity="0.7"/>
<ellipse cx="1425" cy="700" rx="25" ry="8" fill="#9a927c" opacity="0.6" transform="rotate(-25 1425 700)"/>
</g>
<polygon points="1443,645 1448,642 1452,655 1455,668 1447,670 1443,660" fill="#26432f" opacity="0.9"/>
</g>
<g clip-path="url(#c_pyr_small)"><rect x="1637" y="272" width="93" height="22" fill="#5b5d48"/>
<g filter="url(#bl)">
<ellipse cx="1665" cy="285" rx="12" ry="6" fill="#8e8256" opacity="0.8"/>
</g>
</g>
<g clip-path="url(#c_cat)"><rect x="1489" y="334" width="210" height="123" fill="#787458"/>
<g filter="url(#bl)">
<ellipse cx="1570" cy="385" rx="42" ry="30" fill="#a9976f" opacity="0.85"/>
<ellipse cx="1540" cy="425" rx="30" ry="18" fill="#b09c72" opacity="0.8"/>
<ellipse cx="1545" cy="375" rx="22" ry="18" fill="#5e6248" opacity="0.7"/>
<ellipse cx="1620" cy="350" rx="70" ry="10" fill="#5a5e46" opacity="0.8"/>
<ellipse cx="1610" cy="400" rx="25" ry="25" fill="#666a4c" opacity="0.7"/>
<ellipse cx="1512" cy="440" rx="14" ry="12" fill="#a8946a" opacity="0.8"/>
<ellipse cx="1688" cy="345" rx="10" ry="12" fill="#6c766a" opacity="0.8"/>
<ellipse cx="1575" cy="440" rx="25" ry="8" fill="#5c6145" opacity="0.7"/>
</g>
</g>
<g clip-path="url(#c_cat_small)"><rect x="1486" y="476" width="69" height="39" fill="#8b8672"/>
<g filter="url(#bl)">
<ellipse cx="1500" cy="485" rx="12" ry="8" fill="#565c4c" opacity="0.8"/>
<ellipse cx="1530" cy="505" rx="14" ry="5" fill="#4f6470" opacity="0.7"/>
</g>
<polygon points="1494.9,476.7 1542.0,476.7 1542.0,482.5 1546.4,482.5 1546.4,487.2 1553.7,487.2 1553.7,496.8 1549.8,496.8 1549.8,498.7 1542.8,498.7 1542.8,504.7 1538.6,504.7 1538.6,508.6 1523.7,508.6 1523.7,513.3 1513.2,513.3 1513.2,511.2 1509.3,511.2 1509.3,506.0 1505.3,506.0 1505.3,503.4 1498.3,503.4 1498.3,500.8 1494.1,500.8 1494.1,496.8 1497.5,496.8 1497.5,492.4 1487.0,492.4 1487.0,485.1 1494.1,485.1" fill="none" stroke="#55606a" stroke-width="2" opacity="0.5" stroke-linejoin="round"/>
</g>
<g clip-path="url(#c_mallorca)"><rect x="1680" y="577" width="111" height="88" fill="#a48a60"/>
<g filter="url(#bl)">
<ellipse cx="1722" cy="608" rx="50" ry="7" fill="#6a6e4f" opacity="0.85" transform="rotate(-36 1722 608)"/>
<ellipse cx="1690" cy="630" rx="10" ry="8" fill="#6d6f55" opacity="0.7"/>
</g>
<polygon points="1760.6,578.1 1765.8,578.1 1765.8,585.9 1759.6,585.9 1759.6,587.8 1764.5,587.8 1764.5,592.6 1759.6,595.5 1758.6,599.4 1763.5,603.3 1768.3,605.2 1774.1,601.4 1782.9,601.4 1789.7,605.2 1789.7,616.9 1785.8,619.8 1782.9,624.6 1779.0,631.4 1773.2,638.2 1771.2,645.0 1767.4,650.8 1759.6,656.6 1754.8,659.5 1754.8,664.3 1745.1,664.3 1745.1,656.6 1742.2,654.7 1736.4,654.7 1735.4,652.7 1726.7,651.7 1722.8,648.8 1721.8,643.0 1718.9,641.1 1718.9,633.3 1715.0,629.5 1710.2,630.4 1710.2,633.3 1704.4,634.3 1703.4,640.1 1696.6,640.1 1694.7,634.3 1687.9,633.3 1686.0,628.5 1681.7,627.5 1681.1,622.1 1690.8,620.7 1695.7,615.9 1703.4,611.0 1709.2,605.2 1715.0,600.4 1720.9,595.5 1728.6,591.7 1734.4,587.8 1740.2,583.9 1747.0,582.0 1760.6,581.0" fill="none" stroke="#43505c" stroke-width="3.4" opacity="0.85" stroke-linejoin="round"/>
</g>
<g clip-path="url(#c_islet)"><rect x="1736" y="668" width="8" height="14" fill="#4e555c"/>
</g>
<g clip-path="url(#c_menorca)"><rect x="1816" y="564" width="53" height="36" fill="#8c7c5c"/>
<g filter="url(#bl)">
<ellipse cx="1850" cy="575" rx="14" ry="8" fill="#6c6e4c" opacity="0.7" transform="rotate(30 1850 575)"/>
</g>
<polygon points="1820.7,568.4 1831.3,567.4 1841.0,567.4 1843.9,565.1 1846.8,565.1 1846.8,567.1 1853.6,567.4 1854.6,570.3 1858.4,572.3 1862.3,576.2 1865.2,582.9 1867.8,588.8 1867.8,591.7 1865.2,593.6 1864.7,599.4 1860.4,599.4 1852.6,595.5 1844.9,589.7 1839.1,586.8 1831.3,585.9 1821.6,585.3 1820.7,579.1 1816.8,577.1 1817.4,571.3" fill="none" stroke="#43505c" stroke-width="3" opacity="0.8" stroke-linejoin="round"/>
</g>
<g clip-path="url(#c_ibiza)"><rect x="1577" y="679" width="48" height="37" fill="#7f785c"/>
<polygon points="1600.7,681.8 1614.3,679.8 1615.2,682.8 1620.1,682.8 1620.1,687.6 1624.0,687.6 1624.0,690.5 1618.1,691.1 1618.1,695.3 1613.3,699.2 1606.5,703.1 1606.5,706.0 1601.7,710.9 1601.7,714.7 1596.8,714.7 1595.9,710.9 1589.1,709.9 1585.2,710.9 1580.3,710.9 1580.3,707.0 1583.3,706.0 1583.3,699.2 1578.4,698.8 1578.4,695.3 1584.2,694.4 1589.1,694.4 1589.1,689.5 1592.9,685.7 1600.7,683.7" fill="none" stroke="#43505c" stroke-width="3.4" opacity="0.85" stroke-linejoin="round"/>
</g>
<g clip-path="url(#c_formentera)"><rect x="1597" y="715" width="22" height="23" fill="#6a6c5c"/>
<polygon points="1600.7,715.7 1607.5,715.7 1607.5,728.3 1613.3,729.3 1617.8,730.2 1617.8,736.4 1609.4,736.4 1608.4,733.1 1603.6,733.1 1602.6,736.4 1597.8,736.4 1597.8,724.4 1600.7,723.4" fill="none" stroke="#46525e" stroke-width="4" opacity="0.8" stroke-linejoin="round"/>
</g>
</g>
</svg>
</div>

<div id="status">
<span style="left:1px;width:99px;padding-left:4.6px">MapsID: 4592</span><span style="left:102px;width:78px">png</span><span style="left:182px;width:98px">MinZoom: 6</span><span style="left:282px;width:98px">MaxZoom: 18</span><span style="left:382px;width:98px">TileSize: 256</span><span style="left:482px;width:98px">EPSG:3857</span><span style="left:582px;width:1337px;letter-spacing:0.28px">Longitude=-2.241211, Latitude=40.905210, tile=7/63/48.png</span>
</div>
</body></html>
